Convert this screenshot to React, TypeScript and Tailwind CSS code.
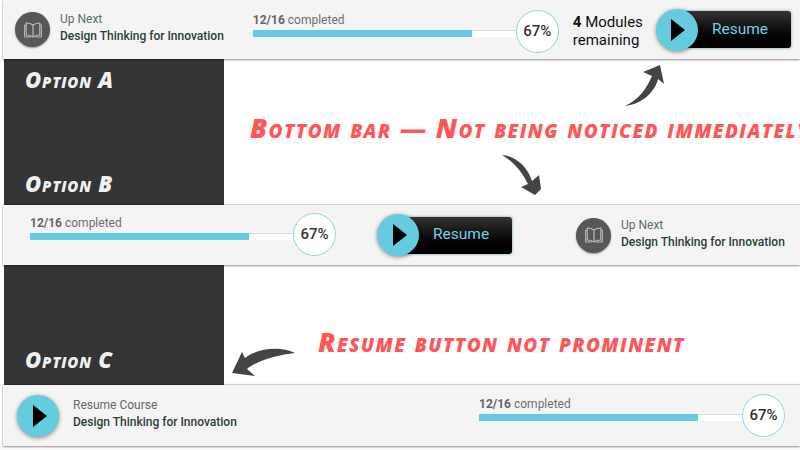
const marker = "[font-family:'Open_Sans',sans-serif] font-extrabold italic [font-variant:small-caps]";

function PlayCircle() {
  return (
    <div className="relative z-10 flex h-[42px] w-[42px] shrink-0 items-center justify-center rounded-full bg-[#65cbde] shadow-[0_1px_4px_rgba(0,0,0,0.45)]">
      <svg width="14" height="22" viewBox="0 0 14 22" className="ml-[3px]">
        <polygon points="0,0 14,11 0,22" fill="#000" />
      </svg>
    </div>
  );
}

function ResumeButton() {
  return (
    <div className="flex items-center">
      <PlayCircle />
      <div className="ml-[-18px] flex h-[37px] w-[111px] items-center rounded-r-[3px] bg-gradient-to-b from-[#353535] to-[#000] pl-[32px] text-[15.5px] text-[#6fd0e2] shadow-[0_0_3px_rgba(60,130,145,0.8)]">
        Resume
      </div>
    </div>
  );
}

function CourseTitle({ label, title }: { label: string; title: string }) {
  return (
    <div className="mt-[-3px] text-[12px] leading-[17px]">
      <p className="text-[#5b6f64]">{label}</p>
      <p className="font-medium text-[#2b4136]">{title}</p>
    </div>
  );
}

function BookIcon() {
  return (
    <svg width="18" height="16" viewBox="0 0 18 16" fill="none" stroke="#b9b9b9" strokeWidth="1.2">
      <path d="M9 3 C7 1.6 4.5 1 2.2 1 V13 C4.5 13 7 13.6 9 15 C11 13.6 13.5 13 15.8 13 V1 C13.5 1 11 1.6 9 3 Z" />
      <path d="M9 3 V15" />
      <path d="M2.2 3 H0.6 V15 H7 M15.8 3 H17.4 V15 H11" strokeWidth="1" />
    </svg>
  );
}

function UpNext() {
  return (
    <div className="flex items-center gap-[10px]">
      <div className="flex h-[35px] w-[35px] items-center justify-center rounded-full bg-[#5a5654] shadow-[0_1px_2px_rgba(0,0,0,0.4)]">
        <BookIcon />
      </div>
      <CourseTitle label="Up Next" title="Design Thinking for Innovation" />
    </div>
  );
}

function Progress() {
  return (
    <div className="relative h-[44px] w-[306px] shrink-0">
      <p className="absolute left-0 top-[2px] whitespace-nowrap text-[12px] leading-[17px] text-[#6f6f6f]">
        <span className="font-bold text-[#666]">12/16</span> completed
      </p>
      <div className="absolute left-0 top-[20px] h-[7px] w-[264px] border-t border-[#dcdcdc] bg-white">
        <div className="mt-[-1px] h-[7px] w-[219px] bg-[#65cbde]" />
      </div>
      <div className="absolute right-0 top-0 flex h-[43px] w-[43px] items-center justify-center rounded-full border border-[#8ad6e4] bg-white text-[15px] font-medium text-[#333]">
        67%
      </div>
    </div>
  );
}

function Bar({ className, children }: { className: string; children: React.ReactNode }) {
  return (
    <div className={`relative z-10 ml-[3px] flex items-center bg-[#f4f4f4] shadow-[0_1px_2px_rgba(0,0,0,0.45),0_-1px_1px_rgba(0,0,0,0.15)] ${className}`}>
      {children}
    </div>
  );
}

function Panel({ labels, className }: { labels: string[]; className: string }) {
  return (
    <div className={`flex w-[220px] shrink-0 flex-col justify-between bg-[#343434] pl-[21px] text-[22px] leading-[24px] tracking-[0.8px] text-[#f0f0f0] ${marker} ${className}`}>
      {labels.map((label) => (
        <p key={label}>{label}</p>
      ))}
    </div>
  );
}

export default function App() {
  return (
    <div className="relative h-[450px] w-[800px] overflow-hidden bg-white font-['Roboto',sans-serif]">
      <Bar className="h-[59px] pl-[12px]">
        <UpNext />
        <div className="ml-[29px] mt-[5px]"><Progress /></div>
        <p className="ml-[14px] mt-[2px] text-[15px] leading-[18px] text-[#111]">
          <span className="font-bold">4</span> Modules<br />remaining
        </p>
        <div className="ml-[13px]"><ResumeButton /></div>
      </Bar>

      <div className="ml-[4px] flex h-[146px]">
        <Panel labels={['Option A', 'Option B']} className="pb-[10px] pt-[8px]" />
        <div className={`overflow-hidden whitespace-nowrap pl-[26px] pt-[54px] text-[27px] leading-[30px] tracking-[1.4px] text-[#ff5757] ${marker}`}>
          Bottom bar — Not being noticed immediately
        </div>
      </div>

      <Bar className="h-[60px] pl-[27px]">
        <Progress />
        <div className="ml-[41px]"><ResumeButton /></div>
        <div className="ml-[64px]"><UpNext /></div>
      </Bar>

      <div className="ml-[4px] flex h-[120px]">
        <Panel labels={['Option C']} className="justify-end pb-[14px]" />
        <div className={`overflow-hidden whitespace-nowrap pl-[94px] pt-[62px] text-[27px] leading-[30px] tracking-[1.4px] text-[#ff5757] ${marker}`}>
          Resume button not prominent
        </div>
      </div>

      <Bar className="h-[61px] pl-[14px]">
        <PlayCircle />
        <div className="ml-[14px] w-[406px]">
          <CourseTitle label="Resume Course" title="Design Thinking for Innovation" />
        </div>
        <Progress />
      </Bar>

      {/* hand drawn arrows */}
      <svg className="pointer-events-none absolute left-0 top-0 z-20" width="800" height="450" viewBox="0 0 800 450">
        <g fill="#444">
          <path d="M625 106 C638 100 646 90 652 76 L643 72 L660 65 L664 84 L658 79 C655 92 642 104 625 106 Z" />
          <path d="M502 155 C515 156 527 166 532 181 L539 175 L541 189 L535 195 L521 187 L528 184 C522 172 514 162 502 155 Z" />
          <path d="M295 353 C280 346 258 348 245 358 L242 352 L232 373 L255 376 L247 369 C258 360 278 355 295 353 Z" />
        </g>
      </svg>
    </div>
  );
}
